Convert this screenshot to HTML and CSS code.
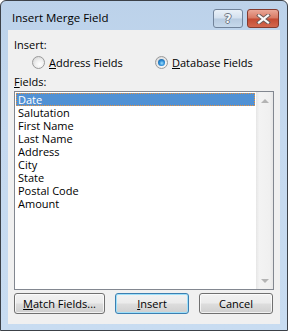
FILE: index.html
```html
<!DOCTYPE html>
<html lang="en">
<head>
    <meta charset="UTF-8">
    <meta name="viewport" content="width=device-width, initial-scale=1.0">
    <title>Insert Merge Field</title>
    <link rel="stylesheet" href="styles.css">
</head>
<body>
    <div class="window">
        <div class="titlebar">
            <span class="title">Insert Merge Field</span>
            <div class="caption-buttons">
                <span class="cap-btn help">?</span>
                <span class="cap-btn close">
                    <svg width="15" height="10" viewBox="0 0 15 10">
                        <path d="M3 1.5 L12 8.5 M12 1.5 L3 8.5" stroke="#6b5a58" stroke-width="4" stroke-linecap="square"/>
                        <path d="M3 1.5 L12 8.5 M12 1.5 L3 8.5" stroke="#fbfbfb" stroke-width="2.2" stroke-linecap="square"/>
                    </svg>
                </span>
            </div>
        </div>

        <div class="client">
            <div class="label">Insert:</div>

            <div class="radio-row">
                <label class="radio">
                    <span class="radio-circle"></span>
                    <span><u>A</u>ddress Fields</span>
                </label>
                <label class="radio checked">
                    <span class="radio-circle"></span>
                    <span><u>D</u>atabase Fields</span>
                </label>
            </div>

            <div class="label fields-label"><u>F</u>ields:</div>

            <div class="listbox">
                <ul class="items">
                    <li class="selected">Date</li>
                    <li>Salutation</li>
                    <li>First Name</li>
                    <li>Last Name</li>
                    <li>Address</li>
                    <li>City</li>
                    <li>State</li>
                    <li>Postal Code</li>
                    <li>Amount</li>
                </ul>
                <div class="scrollbar">
                    <span class="arrow up"></span>
                    <span class="arrow down"></span>
                </div>
            </div>

            <div class="buttons">
                <button class="btn match"><u>M</u>atch Fields...</button>
                <button class="btn default"><u>I</u>nsert</button>
                <button class="btn">Cancel</button>
            </div>
        </div>
    </div>
</body>
</html>
```

FILE: styles.css
```css
body {
    margin: 0;
    background: #ffffff;
    font-family: 'Open Sans', 'Liberation Sans', sans-serif;
    font-size: 11px;
    color: #000;
}

.window {
    width: 288px;
    height: 331px;
    box-sizing: border-box;
    border: 1px solid #3c4148;
    border-radius: 6px 6px 0 0;
    background: linear-gradient(to bottom, #bcd2ea 0%, #c5d9ef 40%, #c8dcf1 100%);
    padding: 0 7px 6px 7px;
    display: flex;
    flex-direction: column;
}

/* title bar */
.titlebar {
    height: 29px;
    display: flex;
    align-items: flex-start;
    justify-content: space-between;
}

.title {
    font-size: 11.5px;
    margin: 9px 0 0 4px;
    line-height: 15px;
}

.caption-buttons {
    display: flex;
    gap: 4px;
    margin: 8px 1px 0 0;
}

.cap-btn {
    height: 19px;
    box-sizing: border-box;
    border: 1px solid #71839a;
    border-radius: 3px;
    display: flex;
    align-items: center;
    justify-content: center;
}

.help {
    width: 30px;
    background: linear-gradient(to bottom, #eaf1f8 0%, #d3e0ee 48%, #b7cbe0 52%, #c6d8eb 100%);
    color: #f4f6f8;
    font-family: 'DejaVu Sans', sans-serif;
    font-weight: bold;
    font-size: 12px;
    text-shadow: 1px 0 #6e7884, -1px 0 #6e7884, 0 1px #6e7884, 0 -1px #6e7884;
}

.close {
    width: 32px;
    border-color: #843a2e;
    background: linear-gradient(to bottom, #eaa898 0%, #d87862 48%, #c44a32 52%, #d3674e 100%);
}

/* client area */
.client {
    flex: 1;
    background: #f0f0f0;
    padding: 7px 6px 0 6px;
    line-height: 15px;
}

.label {
    height: 15px;
}

.radio-row {
    display: grid;
    grid-template-columns: 123px auto;
    margin-top: 3px;
    padding-left: 18px;
    height: 15px;
}

.radio {
    display: flex;
    align-items: center;
    gap: 4px;
}

.radio-circle {
    width: 13px;
    height: 13px;
    box-sizing: border-box;
    border-radius: 50%;
    border: 1px solid #9a9a9a;
    background: radial-gradient(circle at 60% 65%, #ffffff 0%, #f0f0f0 40%, #cfcfcf 100%);
    display: flex;
    align-items: center;
    justify-content: center;
}

.radio.checked .radio-circle::after {
    content: "";
    width: 7px;
    height: 7px;
    border-radius: 50%;
    background: radial-gradient(circle at 55% 60%, #9fe0ff 0%, #2a8ad4 45%, #1b4f7f 100%);
}

.fields-label {
    margin-top: 4px;
}

/* list box */
.listbox {
    margin-top: 2px;
    height: 199px;
    box-sizing: border-box;
    border: 1px solid #828790;
    background: #fff;
    display: flex;
}

.items {
    list-style: none;
    margin: 0;
    padding: 1px;
    flex: 1;
}

.items li {
    height: 13px;
    line-height: 13px;
    padding-left: 2px;
}

.items li.selected {
    background: #5191d4;
    color: #fff;
    outline: 1px dotted #e8913e;
    outline-offset: -1px;
}

.scrollbar {
    width: 17px;
    background: linear-gradient(to right, #e6e6e6 0%, #f3f3f3 20%, #f0f0f0 80%, #e6e6e6 100%);
    display: flex;
    flex-direction: column;
    justify-content: space-between;
    align-items: center;
    padding: 7px 0 6px 0;
    box-sizing: border-box;
}

.arrow {
    width: 0;
    height: 0;
    border-left: 4px solid transparent;
    border-right: 4px solid transparent;
}

.arrow.up {
    border-bottom: 4px solid #b4b4b4;
}

.arrow.down {
    border-top: 4px solid #b4b4b4;
}

/* buttons */
.buttons {
    display: flex;
    justify-content: space-between;
    margin-top: 3px;
    padding-right: 1px;
}

.btn {
    height: 21px;
    width: 74px;
    padding: 0;
    font-family: inherit;
    font-size: 11px;
    color: #000;
    border: 1px solid #707070;
    border-radius: 3px;
    background: linear-gradient(to bottom, #f2f2f2 0%, #ebebeb 48%, #dddddd 52%, #cfcfcf 100%);
    box-shadow: inset 0 0 0 1px rgba(255, 255, 255, 0.7);
}

.btn.match {
    width: 91px;
}

.btn.default {
    border-color: #3c7fb1;
    box-shadow: inset 0 0 0 1px #9ee0fa;
}
```
